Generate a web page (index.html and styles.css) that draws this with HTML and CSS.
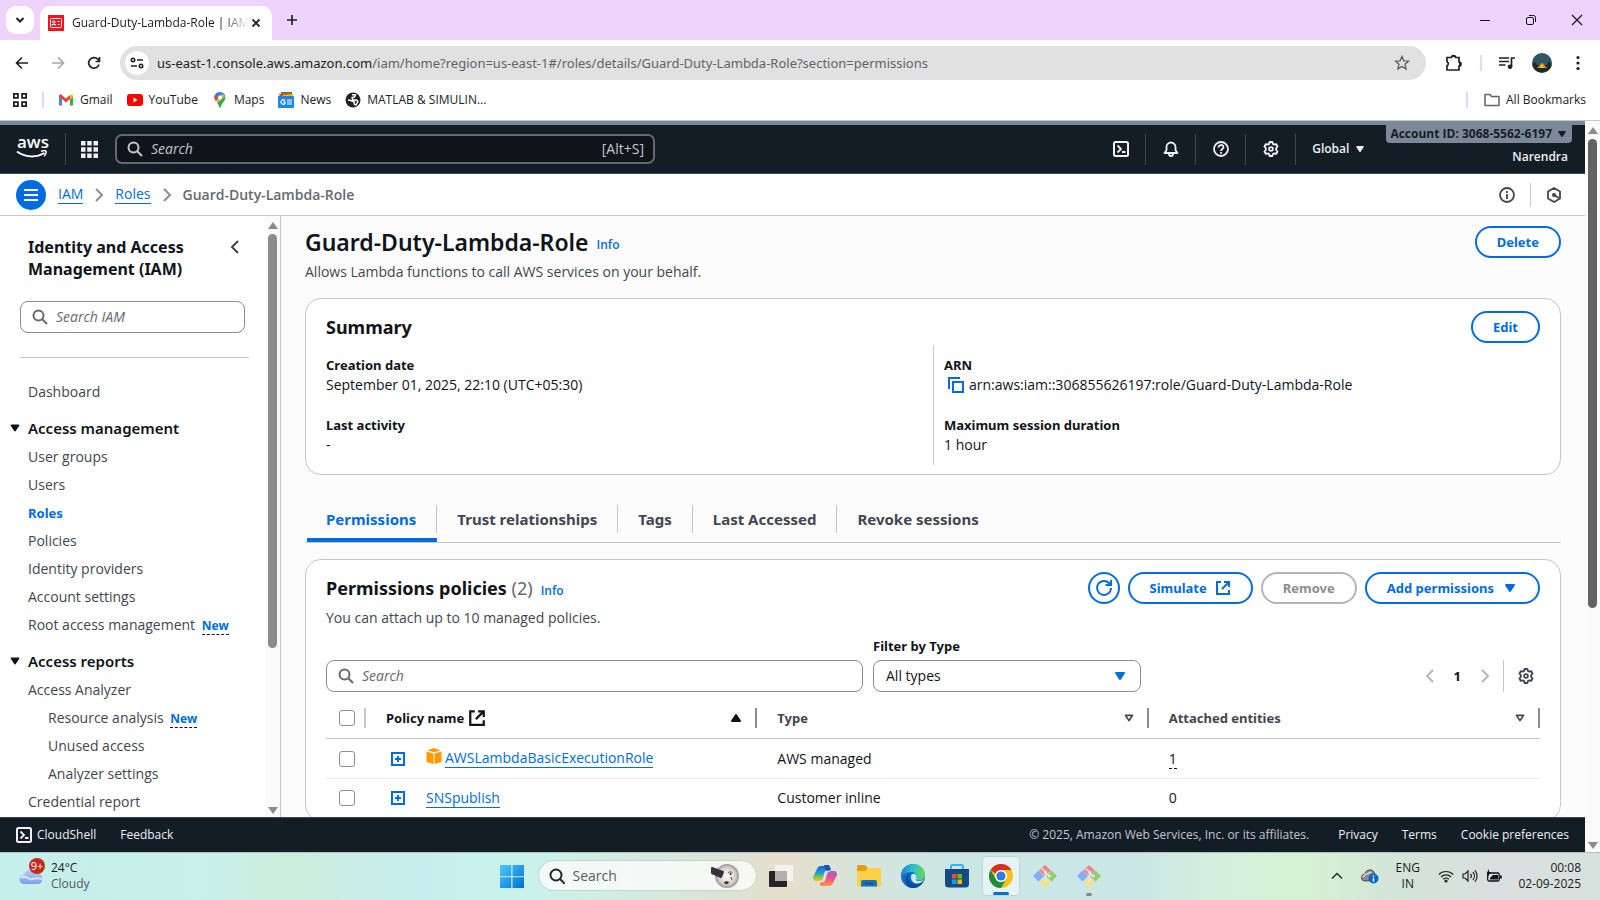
FILE: index.html
```html
<!DOCTYPE html>
<html lang="en">
<head>
<meta charset="utf-8">
<title>Guard-Duty-Lambda-Role | IAM</title>
<link rel="stylesheet" href="styles.css">
</head>
<body>
<svg class="sprite" aria-hidden="true">
  <defs>
    <symbol id="i-search" viewBox="0 0 16 16"><circle cx="6.5" cy="6.5" r="5" fill="none" stroke="currentColor" stroke-width="2"/><path d="M10.5 10.5 15 15" stroke="currentColor" stroke-width="2"/></symbol>
    <symbol id="i-left" viewBox="0 0 16 16"><path d="M11 2 5 8l6 6" fill="none" stroke="currentColor" stroke-width="2"/></symbol>
    <symbol id="i-right" viewBox="0 0 16 16"><path d="M5 2l6 6-6 6" fill="none" stroke="currentColor" stroke-width="2"/></symbol>
    <symbol id="i-down" viewBox="0 0 16 16"><path d="M4 5h8l-4 6z" fill="currentColor" stroke="currentColor" stroke-width="2" stroke-linejoin="round"/></symbol>
    <symbol id="i-up" viewBox="0 0 16 16"><path d="M4 11h8L8 5z" fill="currentColor" stroke="currentColor" stroke-width="2" stroke-linejoin="round"/></symbol>
    <symbol id="i-sort" viewBox="0 0 16 16"><path d="M4 5h8l-4 6z" fill="none" stroke="currentColor" stroke-width="2" stroke-linejoin="round"/></symbol>
    <symbol id="i-external" viewBox="0 0 16 16"><path d="M6 2H2v12h12v-4M9 2h5v5M14 2 7 9" fill="none" stroke="currentColor" stroke-width="2"/></symbol>
    <symbol id="i-gear" viewBox="0 0 16 16"><path d="M6.6 1h2.8l.5 1.9 1.3.7 1.9-.5 1.4 2.4L13.2 7v2l1.3 1.5-1.4 2.4-1.9-.5-1.3.7-.5 1.9H6.600l-.5-1.900-1.300-.7-1.900.5-1.400-2.400L2.800 9V7L1.500 5.500l1.400-2.400 1.900.5 1.300-.7z" fill="none" stroke="currentColor" stroke-width="1.900" stroke-linejoin="round"/><circle cx="8" cy="8" r="1.900" fill="none" stroke="currentColor" stroke-width="1.800"/></symbol>
    <symbol id="i-shell" viewBox="0 0 16 16"><rect x="1" y="1" width="14" height="14" rx="1.500" fill="none" stroke="currentColor" stroke-width="2"/><path d="M4.500 4.500 8 8l-3.500 3.500M9 11h3.500" fill="none" stroke="currentColor" stroke-width="1.800"/></symbol>
    <symbol id="i-plus" viewBox="0 0 14 14"><path d="M1 1h12v12H1zM7 4v6M4 7h6" fill="none" stroke="currentColor" stroke-width="2"/></symbol>
    <symbol id="i-git" viewBox="0 0 24 24"><path d="M12 1 6 6.500 12 12l6-5.500z" fill="#f58286"/><path d="M5.500 6.500 0 12l5.500 5.500L11 12z" fill="#84adf7"/><path d="M18.500 6.500 24 12l-5.500 5.500L13 12z" fill="#8fce6a"/><path d="M12 12.500 6.500 18 12 23.500 17.500 18z" fill="#fbe183"/><path d="M8.500 4.500 12.500 8v8M12.500 9l4 3" stroke="#d9eae9" stroke-width="1.600" fill="none"/><circle cx="12.500" cy="8" r="1.600" fill="#d9eae9"/><circle cx="12.500" cy="16" r="1.600" fill="#d9eae9"/><circle cx="16.500" cy="12" r="1.600" fill="#d9eae9"/></symbol>
  </defs>
</svg>

<header class="browser">
  <div class="tabstrip">
    <button class="tab-search" aria-label="Search tabs"><svg width="10" height="10" viewBox="0 0 10 10"><path d="M1.500 3 5 6.500 8.500 3" fill="none" stroke="#202124" stroke-width="2"/></svg></button>
    <div class="tab">
      <svg width="16" height="16" viewBox="0 0 16 16"><rect width="16" height="16" fill="#f5121c"/><g fill="none" stroke="#fff"><rect x="2.500" y="3.500" width="11" height="9" rx="1"/><circle cx="5.800" cy="7" r="1.200"/><path d="M4 10.500V9.500h3.500v1M9.500 6.500h2M9.500 9.500h2"/></g></svg>
      <span class="tab-title">Guard-Duty-Lambda-Role | IAM</span>
      <button class="plain" aria-label="Close tab"><svg width="10" height="10" viewBox="0 0 10 10"><path d="M1.500 1.500l7 7m0-7-7 7" stroke="#202124" stroke-width="1.800"/></svg></button>
    </div>
    <button class="plain new-tab" aria-label="New tab"><svg width="12" height="12" viewBox="0 0 12 12"><path d="M6 1v10M1 6h10" stroke="#202124" stroke-width="1.700"/></svg></button>
    <div class="window-buttons">
      <button class="plain" aria-label="Minimize"><svg width="12" height="12" viewBox="0 0 12 12"><path d="M1 6.500h10" stroke="#111"/></svg></button>
      <button class="plain" aria-label="Restore"><svg width="12" height="12" viewBox="0 0 12 12" fill="none" stroke="#111"><rect x="1.500" y="3.500" width="7" height="7" rx="1.500"/><path d="M4 1.500h4.500a2 2 0 0 1 2 2V8"/></svg></button>
      <button class="plain" aria-label="Close"><svg width="12" height="12" viewBox="0 0 12 12"><path d="M1 1l10 10M11 1 1 11" stroke="#111" stroke-width="1.100"/></svg></button>
    </div>
  </div>
  <div class="toolbar">
    <button class="plain nav" aria-label="Back"><svg width="14" height="14" viewBox="0 0 14 14" fill="none" stroke="#202124" stroke-width="1.600"><path d="M7 1.500 1.500 7 7 12.500M2 7h11"/></svg></button>
    <button class="plain nav" aria-label="Forward"><svg width="14" height="14" viewBox="0 0 14 14" fill="none" stroke="#a6a6a6" stroke-width="1.600"><path d="M7 1.500 12.500 7 7 12.500M12 7H1"/></svg></button>
    <button class="plain nav" aria-label="Reload"><svg width="14" height="14" viewBox="0 0 14 14" fill="none" stroke="#202124" stroke-width="1.700"><path d="M12 8.500A5.300 5.300 0 1 1 10.800 3.200L12.500 5M12.500 1v4.500H8.500"/></svg></button>
    <div class="omnibox">
      <span class="site-info"><svg width="14" height="14" viewBox="0 0 14 14" fill="none" stroke="#202124" stroke-width="1.600"><circle cx="3" cy="4" r="1.700"/><path d="M7 4h6M1 10h6"/><circle cx="11" cy="10" r="1.700"/></svg></span>
      <span class="url"><b>us-east-1.console.aws.amazon.com</b>/iam/home?region=us-east-1#/roles/details/Guard-Duty-Lambda-Role?section=permissions</span>
      <svg width="16" height="16" viewBox="0 0 16 16"><path d="M8 1.500l1.900 4.300 4.700.4-3.600 3.100 1.100 4.600L8 11.500l-4.100 2.400L5 9.300 1.400 6.200l4.700-.4z" fill="none" stroke="#5a5a5a" stroke-width="1.300"/></svg>
    </div>
    <div class="tool-icons">
      <svg width="18" height="18" viewBox="0 0 18 18"><path d="M2 3.500h4.500a2 2 0 0 1 4 0H14V8a2 2 0 0 1 0 4v4H2v-4.200a2.200 2.200 0 0 0 0-4z" fill="none" stroke="#202124" stroke-width="1.700"/><path d="M6.500 3a2 2 0 0 1 4 0M14 7.500a2 2 0 0 1 0 4" fill="#202124"/></svg>
      <i class="pink-bar"></i>
      <svg width="16" height="14" viewBox="0 0 16 14"><path d="M0 2h10M0 5.500h10M0 9h6.500M12.500 11V2H16" fill="none" stroke="#202124" stroke-width="1.700"/><circle cx="11" cy="10.800" r="2.300" fill="#202124"/></svg>
      <svg width="20" height="20" viewBox="0 0 20 20"><circle cx="10" cy="10" r="10" fill="#2f5566"/><path d="M.3 12 3 8.500 5 12h10l2-3.500 2.700 3.500A10 10 0 0 1 .3 12z" fill="#1d2b24"/><path d="M5 15 10 9.500 15 15z" fill="#f58518"/><path d="M8.500 15 10 11l1.500 4z" fill="#ffd34d"/></svg>
      <svg class="dots" width="4" height="16" viewBox="0 0 4 16" fill="#202124"><circle cx="2" cy="2.500" r="1.600"/><circle cx="2" cy="8" r="1.600"/><circle cx="2" cy="13.500" r="1.600"/></svg>
    </div>
  </div>
  <nav class="bookmarks">
    <svg width="16" height="16" viewBox="0 0 16 16" fill="none" stroke="#202124" stroke-width="1.800"><path d="M1.900 1.900h4v4h-4zM10.100 1.900h4v4h-4zM1.900 10.100h4v4h-4zM10.100 10.100h4v4h-4z"/></svg>
    <i class="pink-bar"></i>
    <a href="#"><svg width="16" height="16" viewBox="0 0 16 16"><path d="M1 4v9.500h3V7z" fill="#4285f4"/><path d="M15 4v9.500h-3V7z" fill="#34a853"/><path d="M1 3.500 2.500 2 8 6.500 12 3v4L8 10.500 4 7 1 5z" fill="#ea4335"/><path d="M12 3.500c1-1.500 3-1 3 .5v1L12 7.500z" fill="#fbbc04"/></svg>Gmail</a>
    <a href="#"><svg width="16" height="16" viewBox="0 0 16 16"><rect y="2" width="16" height="12" rx="3" fill="#f00"/><path d="M6.500 5.500v5l4-2.500z" fill="#fff"/></svg>YouTube</a>
    <a href="#"><svg width="16" height="16" viewBox="0 0 16 16"><path d="M2.500 5.500A5.500 5.500 0 0 1 9 .2L4 7.500z" fill="#1a73e8"/><path d="M8 0a5.500 5.500 0 0 1 5.200 3.800L5 10 2.500 6z" fill="#4285f4"/><path d="M3.200 2.500 6 5l-2.400 4C2 6.500 2 4 3.200 2.500z" fill="#ea4335"/><path d="M4 9l6-6.500L12.500 3 6.500 12z" fill="#fbbc04"/><path d="M13.200 3.800C14.500 9 9 11 8.500 16H7.500C7.300 14 6 12.500 5.300 11.300z" fill="#34a853"/><circle cx="8" cy="5.500" r="2" fill="#fff"/></svg>Maps</a>
    <a href="#"><svg width="16" height="16" viewBox="0 0 16 16"><path d="M3 0h11v5H3z" fill="#0c9d58"/><path d="M1 2l11-1.500L13 5H2z" fill="#ea4335"/><path d="M5 3l10-1v3H5z" fill="#fbbc04"/><rect y="4" width="16" height="12" rx="1" fill="#1a84f0"/><path d="M7 8.500A2.300 2.300 0 1 0 7 11.500V10H5M9 8h5M9 10h5M9 12h5" fill="none" stroke="#fff" stroke-width="1.200"/></svg>News</a>
    <a href="#"><svg width="16" height="16" viewBox="0 0 16 16"><circle cx="8" cy="8" r="7.500" fill="#202124"/><path d="M7 2.800h3.500L9.500 5 7 5.500 8 8h3.500l1.500 1.500-2 3.500-1.800-1 .3-2L6 8.500 3 8" fill="none" stroke="#fff" stroke-width="1.500" stroke-linejoin="round"/></svg>MATLAB &amp; SIMULIN...</a>
    <span class="all-bookmarks"><i class="pink-bar"></i><a href="#"><svg width="16" height="14" viewBox="0 0 16 14"><path d="M1 1.500h5l1.500 2H15v9H1z" fill="none" stroke="#5f6368" stroke-width="1.500" stroke-linejoin="round"/></svg>All Bookmarks</a></span>
  </nav>
</header>

<div class="viewport">
  <div class="page">
    <header class="aws-header">
      <a class="aws-logo" href="#" aria-label="AWS"><span>aws</span><svg width="32" height="9" viewBox="0 0 32 9"><path d="M1 1.500c8 6 19 6.500 27.500 1.500" fill="none" stroke="#fff" stroke-width="2"/><path d="M25 1.300c2.500-.8 4.500-.8 5 0s-.3 3-1.800 5" fill="none" stroke="#fff" stroke-width="1.500"/></svg></a>
      <button class="plain apps" aria-label="Services"><svg width="17" height="17" viewBox="0 0 17 17" fill="#f0f0f5"><path d="M0 0h4.500v4.500H0zM6.200 0h4.500v4.500H6.200zM12.500 0H17v4.500h-4.500zM0 6.200h4.500v4.500H0zM6.200 6.200h4.500v4.500H6.200zM12.500 6.200H17v4.500h-4.500zM0 12.500h4.500V17H0zM6.200 12.500h4.500V17H6.200zM12.500 12.500H17V17h-4.500z"/></svg></button>
      <label class="aws-search"><svg width="16" height="16"><use href="#i-search"/></svg><input type="search" placeholder="Search" aria-label="Search"><span>[Alt+S]</span></label>
      <div class="aws-tools">
        <button class="plain" aria-label="CloudShell"><svg width="16" height="16"><use href="#i-shell"/></svg></button>
        <button class="plain" aria-label="Notifications"><svg width="16" height="16" viewBox="0 0 16 16" fill="none" stroke="currentColor" stroke-width="1.800"><path d="M1.500 12h13l-2-2.700V6a4.500 4.500 0 0 0-9 0v3.300z" stroke-linejoin="round"/><path d="M6 12v1a2 2 0 0 0 4 0v-1"/></svg></button>
        <button class="plain" aria-label="Help"><svg width="16" height="16" viewBox="0 0 16 16" fill="none" stroke="currentColor" stroke-width="1.800"><circle cx="8" cy="8" r="7"/><path d="M5.500 6.500C5.500 3.200 10.500 3.300 10.500 6.200 10.500 8 8 8 8 10M8 11v1.700"/></svg></button>
        <button class="plain" aria-label="Settings"><svg width="16" height="16"><use href="#i-gear"/></svg></button>
      </div>
      <button class="plain region">Global <svg width="12" height="12"><use href="#i-down"/></svg></button>
      <div class="account"><button class="plain account-id">Account ID: 3068-5562-6197 <svg width="12" height="12"><use href="#i-down"/></svg></button><span>Narendra</span></div>
    </header>

    <div class="crumb-bar">
      <button class="menu" aria-label="Menu"><svg width="14" height="14" viewBox="0 0 14 14"><path d="M0 2h14M0 7h14M0 12h14" stroke="#fff" stroke-width="2"/></svg></button>
      <nav class="crumbs"><a href="#">IAM</a><svg width="16" height="16"><use href="#i-right"/></svg><a href="#">Roles</a><svg width="16" height="16"><use href="#i-right"/></svg><span>Guard-Duty-Lambda-Role</span></nav>
      <div class="crumb-tools">
        <button class="plain" aria-label="Info"><svg width="16" height="16" viewBox="0 0 16 16" fill="none" stroke="currentColor" stroke-width="1.800"><circle cx="8" cy="8" r="7"/><path d="M8 4v2M8 7v5"/></svg></button>
        <button class="plain" aria-label="Resources"><svg width="16" height="16" viewBox="0 0 16 16" fill="none" stroke="currentColor" stroke-width="1.800"><path d="M8 1l6 3.500v7L8 15l-6-3.500v-7z" stroke-linejoin="round"/><path d="M8 8l5 3"/><circle cx="8" cy="8" r="2" fill="currentColor" stroke="none"/></svg></button>
      </div>
    </div>

    <div class="body">
      <aside class="sidebar">
        <div class="side-scroll">
          <div class="side-title"><h2>Identity and Access Management (IAM)</h2><button class="plain" aria-label="Collapse"><svg width="16" height="16"><use href="#i-left"/></svg></button></div>
          <label class="field side-search"><svg width="16" height="16"><use href="#i-search"/></svg><input type="search" placeholder="Search IAM" aria-label="Search IAM"></label>
          <hr>
          <nav class="side-nav">
            <a href="#">Dashboard</a>
            <h3><svg width="14" height="14"><use href="#i-down"/></svg>Access management</h3>
            <a href="#">User groups</a>
            <a href="#">Users</a>
            <a href="#" class="current">Roles</a>
            <a href="#">Policies</a>
            <a href="#">Identity providers</a>
            <a href="#">Account settings</a>
            <a href="#">Root access management <small>New</small></a>
            <h3><svg width="14" height="14"><use href="#i-down"/></svg>Access reports</h3>
            <a href="#">Access Analyzer</a>
            <a href="#" class="sub">Resource analysis <small>New</small></a>
            <a href="#" class="sub">Unused access</a>
            <a href="#" class="sub">Analyzer settings</a>
            <a href="#">Credential report</a>
          </nav>
        </div>
        <div class="scrollbar side-bar"><i class="arrow-up"></i><i class="thumb"></i><i class="arrow-down"></i></div>
      </aside>

      <main class="content">
        <div class="title-row"><h1>Guard-Duty-Lambda-Role</h1><a class="info" href="#">Info</a><button class="btn">Delete</button></div>
        <p class="lead">Allows Lambda functions to call AWS services on your behalf.</p>

        <section class="card summary">
          <div class="card-head"><h2>Summary</h2><button class="btn">Edit</button></div>
          <div class="facts">
            <dl><dt>Creation date</dt><dd>September 01, 2025, 22:10 (UTC+05:30)</dd><dt>Last activity</dt><dd>-</dd></dl>
            <dl><dt>ARN</dt><dd class="arn"><svg width="16" height="16" viewBox="0 0 16 16" fill="none" stroke="currentColor" stroke-width="2"><path d="M5 5h10v10H5zM1 12V1h11"/></svg>arn:aws:iam::306855626197:role/Guard-Duty-Lambda-Role</dd><dt>Maximum session duration</dt><dd>1 hour</dd></dl>
          </div>
        </section>

        <div class="tabs" role="tablist">
          <button role="tab" class="active" aria-selected="true"><span>Permissions</span></button><button role="tab"><span>Trust relationships</span></button><button role="tab"><span>Tags</span></button><button role="tab"><span>Last Accessed</span></button><button role="tab"><span>Revoke sessions</span></button>
        </div>

        <section class="card policies">
          <div class="card-head">
            <h2>Permissions policies <span>(2)</span></h2><a class="info" href="#">Info</a>
            <div class="actions">
              <button class="btn round" aria-label="Refresh"><svg width="18" height="18" viewBox="0 0 18 18" fill="none" stroke="currentColor" stroke-width="2"><path d="M16 9a7 7 0 1 1-2-5l2 1.800M16 1v5h-5.500"/></svg></button>
              <button class="btn">Simulate <svg width="16" height="16"><use href="#i-external"/></svg></button>
              <button class="btn" disabled>Remove</button>
              <button class="btn">Add permissions <svg width="16" height="16"><use href="#i-down"/></svg></button>
            </div>
          </div>
          <p class="hint">You can attach up to 10 managed policies.</p>
          <div class="filters">
            <label class="field policy-search"><svg width="16" height="16"><use href="#i-search"/></svg><input type="search" placeholder="Search" aria-label="Search policies"></label>
            <div class="type-filter"><label for="type">Filter by Type</label><div class="select-wrap"><select id="type"><option>All types</option></select><svg width="16" height="16"><use href="#i-down"/></svg></div></div>
            <div class="pager"><button class="plain dim" aria-label="Previous"><svg width="16" height="16"><use href="#i-left"/></svg></button><b>1</b><button class="plain dim" aria-label="Next"><svg width="16" height="16"><use href="#i-right"/></svg></button><button class="plain prefs" aria-label="Preferences"><svg width="16" height="16"><use href="#i-gear"/></svg></button></div>
          </div>
          <table>
            <colgroup><col class="c-check"><col><col><col></colgroup>
            <thead><tr>
              <th><div class="th pale"><input type="checkbox" aria-label="Select all"></div></th>
              <th><div class="th dark"><span>Policy name <svg width="18" height="18"><use href="#i-external"/></svg></span><svg width="16" height="16"><use href="#i-up"/></svg></div></th>
              <th><div class="th"><span>Type</span><svg width="14" height="14"><use href="#i-sort"/></svg></div></th>
              <th><div class="th"><span>Attached entities</span><svg width="14" height="14"><use href="#i-sort"/></svg></div></th>
            </tr></thead>
            <tbody>
              <tr><td class="check"><input type="checkbox" aria-label="Select AWSLambdaBasicExecutionRole"></td><td><div class="name"><button class="plain expand" aria-label="Expand"><svg width="14" height="14"><use href="#i-plus"/></svg></button><svg class="cube" width="16" height="16" viewBox="0 0 16 16" fill="#ff9900"><path d="M1.500 2.500 8 0l6.500 2.500L8 4.300zM.5 3.500l7 2V16l-7-2zM15.500 3.500l-7 2V16l7-2z"/></svg><a href="#">AWSLambdaBasicExecutionRole</a></div></td><td>AWS managed</td><td><span class="dashed">1</span></td></tr>
              <tr><td class="check"><input type="checkbox" aria-label="Select SNSpublish"></td><td><div class="name"><button class="plain expand" aria-label="Expand"><svg width="14" height="14"><use href="#i-plus"/></svg></button><a href="#">SNSpublish</a></div></td><td>Customer inline</td><td>0</td></tr>
            </tbody>
          </table>
        </section>
      </main>
    </div>

    <footer class="aws-footer">
      <a href="#"><svg width="16" height="16"><use href="#i-shell"/></svg>CloudShell</a><a href="#" class="feedback">Feedback</a>
      <span>© 2025, Amazon Web Services, Inc. or its affiliates.</span>
      <a href="#">Privacy</a><a href="#">Terms</a><a href="#">Cookie preferences</a>
    </footer>
  </div>
  <div class="scrollbar page-bar"><i class="arrow-up"></i><i class="thumb"></i><i class="arrow-down"></i></div>
</div>

<footer class="taskbar">
  <div class="weather">
    <div class="weather-icon"><svg width="26" height="20" viewBox="0 0 26 20"><defs><linearGradient id="cl" x2="0" y2="1"><stop stop-color="#b9cdf5"/><stop offset="1" stop-color="#7f9fe6"/></linearGradient></defs><path d="M5 18a4.500 4.500 0 0 1 0-9 7 7 0 0 1 13-2 5.800 5.800 0 0 1 2 11z" fill="url(#cl)"/><path d="M2 12c4-3 6 0 9 1s8-3 13 1" fill="none" stroke="#d8e4fb" stroke-width="2"/></svg><span class="badge">9+</span></div>
    <div>24°C<br><span>Cloudy</span></div>
  </div>
  <div class="apps-row">
    <button class="tile" aria-label="Start"><svg width="24" height="24" viewBox="0 0 24 24"><defs><linearGradient id="wn" x2="1" y2="1"><stop stop-color="#4cc9fb"/><stop offset="1" stop-color="#006fd3"/></linearGradient></defs><path d="M0 1h11.300v11.300H0zM12.500 1H24v11.300H12.500zM0 13.300h11.300V24H0zM12.500 13.300H24V24H12.500z" fill="url(#wn)"/></svg></button>
    <label class="task-search"><svg width="16" height="16" viewBox="0 0 16 16" fill="none" stroke="#222" stroke-width="1.900"><circle cx="7" cy="7" r="5.500"/><path d="M11 11l4.300 4.300" stroke-linecap="round"/></svg><input type="search" placeholder="Search" aria-label="Search Windows"><svg width="30" height="26" viewBox="0 0 30 26"><defs><radialGradient id="mn"><stop stop-color="#fff"/><stop offset=".7" stop-color="#d5d0cc"/><stop offset="1" stop-color="#9c9490"/></radialGradient></defs><circle cx="17" cy="13" r="12" fill="url(#mn)"/><path d="M2 5l11 4-2 5-9-4z" fill="#3a2e3b" stroke="#3a2e3b" stroke-width="2" stroke-linejoin="round"/><path d="M18 10c2-2 4-1 4 0M21 14l1 3" fill="none" stroke="#554d4c"/><circle cx="20.500" cy="11" r="1" fill="#332b2b"/><path d="M14 19c2-1 4-1 5 0-1 3-4 3-5 0z" fill="#4b2b31"/></svg></label>
    <button class="tile" aria-label="Task view"><svg width="24" height="24" viewBox="0 0 24 24"><rect y="7" width="18" height="16" rx="1" fill="#252525"/><rect x="6" y="1" width="18" height="16" rx="1" fill="#fafafa" fill-opacity=".75"/><rect x="6" y="7" width="12" height="10" fill="#b3b0ab"/></svg></button>
    <button class="tile" aria-label="Copilot"><svg width="24" height="24" viewBox="0 0 24 24"><defs><linearGradient id="c1" x2="0" y2="1"><stop stop-color="#1c5fd0"/><stop offset=".45" stop-color="#18a0d8"/><stop offset=".75" stop-color="#8cc63f"/><stop offset="1" stop-color="#f4c20d"/></linearGradient><linearGradient id="c2" x2="0" y2="1"><stop stop-color="#9b5de5"/><stop offset=".5" stop-color="#f0508c"/><stop offset="1" stop-color="#ff9a3c"/></linearGradient></defs><path d="M8 2h7q3 0 2 3l-3 1q-2 0-3 4l-1 4q-1 3-4 3H3q-3 0-3-4L4 5q1-3 4-3z" fill="url(#c1)"/><path d="M16 22H9q-3 0-2-3l3-1q2 0 3-4l1-4q1-3 4-3h3q3 0 3 4l-4 8q-1 3-4 3z" fill="url(#c2)"/><path d="M11 1h5l2 5-5 1z" fill="#1752b8"/></svg></button>
    <button class="tile" aria-label="File Explorer"><svg width="24" height="24" viewBox="0 0 24 24"><path d="M0 2.500Q0 1 1.500 1H8l3 3h13v6H0z" fill="#e0a010"/><path d="M0 7h8l3-3h13v17q0 1.500-1.500 1.500h-21Q0 22.500 0 21z" fill="#ffcf48"/><path d="M4 22.500V18q0-2 2-2h12q2 0 2 2v4.500z" fill="#1573be"/><path d="M8 19.500h8" stroke="#0b4d8c" stroke-width="1.500"/></svg></button>
    <button class="tile" aria-label="Edge"><svg width="24" height="24" viewBox="0 0 24 24"><defs><linearGradient id="e1"><stop stop-color="#1588d5"/><stop offset=".5" stop-color="#2fc0d0"/><stop offset="1" stop-color="#6ed94b"/></linearGradient></defs><circle cx="12" cy="12" r="12" fill="#1170c6"/><path d="M.3 9C2 3 7 0 12 0c7 0 12 5 12 10.500 0 4-3 6-6 6-4 0-4-2-3-4 .5-3-2-4.500-5-4.500C6 8 2 9.500.3 13z" fill="url(#e1)"/><path d="M9 9c-3 4 0 11 6 11 3 0 5-1 7-2.500C20 22 16 24 12 24 6 24 3 18 5 13c1-2 2-3 4-4z" fill="#0c4c9e"/><path d="M10 12.500c0-3 4-4 5-1s-2 5.500 3 5.500c2 0 4-.5 5-2-2 4-5 5-8 4.500s-5-3-5-7z" fill="#cde9e7"/></svg></button>
    <button class="tile" aria-label="Microsoft Store"><svg width="24" height="24" viewBox="0 0 24 24"><path d="M6 6V2.500Q6 1 7.500 1h9Q18 1 18 2.500V6" fill="none" stroke="#31b5ef" stroke-width="2"/><path d="M0 5h24v15q0 3.500-3.500 3.500h-17Q0 23.500 0 20z" fill="#154a83"/><path d="M7 10h4.500v4.500H7z" fill="#f25022"/><path d="M12.500 10H17v4.500h-4.500z" fill="#7fba00"/><path d="M7 15.500h4.500V20H7z" fill="#00a4ef"/><path d="M12.500 15.500H17V20h-4.500z" fill="#ffb900"/></svg></button>
    <button class="tile on" aria-label="Chrome"><svg width="24" height="24" viewBox="0 0 24 24"><circle cx="12" cy="12" r="12" fill="#fbc116"/><path d="M1.600 6A12 12 0 0 1 22.400 6H12a6 6 0 0 0-5.500 3.500z" fill="#d93025"/><path d="M1.600 6A12 12 0 0 0 12 24l5.200-9A6 6 0 0 1 6.800 15z" fill="#1e8e3e"/><circle cx="12" cy="12" r="6" fill="#fff"/><circle cx="12" cy="12" r="4.600" fill="#2f7bea"/></svg><i class="run"></i></button>
    <button class="tile" aria-label="Git"><svg width="24" height="24"><use href="#i-git"/></svg></button>
    <button class="tile" aria-label="Git Bash"><svg width="24" height="24"><use href="#i-git"/></svg><i class="run idle"></i></button>
  </div>
  <div class="tray">
    <svg width="12" height="8" viewBox="0 0 12 8"><path d="M1 6.500 6 1.500l5 5" fill="none" stroke="#222" stroke-width="1.300"/></svg>
    <svg class="onedrive" width="18" height="16" viewBox="0 0 18 16"><path d="M4 13a3.500 3.500 0 0 1 0-7 5 5 0 0 1 9-2l2 8z" fill="#8c8c8c" stroke="#444"/><path d="M1.500 9c3-4 7-4 9-5" stroke="#d7d7d7" stroke-width="1.500" fill="none"/><circle cx="12.500" cy="10.500" r="5" fill="#0a66c2"/><path d="M12.500 7.300v1.500M12.500 9.700v4" stroke="#fff" stroke-width="1.500"/></svg>
    <div class="lang">ENG<br>IN</div>
    <div class="status">
      <svg width="16" height="14" viewBox="0 0 16 14" fill="none" stroke="#222" stroke-width="1.200"><path d="M.8 5.500a10.200 10.200 0 0 1 14.400 0M3 8a7 7 0 0 1 10 0M5.200 10.300a4 4 0 0 1 5.600 0"/><circle cx="8" cy="12" r="1" fill="#222"/></svg>
      <svg width="16" height="14" viewBox="0 0 16 14" fill="none" stroke="#222" stroke-width="1.200"><path d="M1 5h2l3-3v10L3 9H1zM8.500 5a3 3 0 0 1 0 4M10.800 3a6 6 0 0 1 0 8M13 1.300a9 9 0 0 1 0 11.400"/></svg>
      <svg width="16" height="14" viewBox="0 0 16 14"><rect x="1.700" y="4" width="11.500" height="8" rx="1.500" fill="none" stroke="#111" stroke-width="1.300"/><path d="M4 9l3-3h5v4.500H4zM14 6.500h1.800v3H14z" fill="#111"/><path d="M3 0 .5 4.500h2L1.500 8 5 3H3z" fill="#111"/></svg>
    </div>
    <div class="clock">00:08<br>02-09-2025</div>
  </div>
</footer>
</body>
</html>
```

FILE: styles.css
```css
* { box-sizing: border-box; }
body {
  margin: 0;
  height: 100vh;
  display: flex;
  flex-direction: column;
  overflow: hidden;
  font: 14px/20px "Open Sans", sans-serif;
  color: #0f141a;
  background: #fff;
}
svg { flex: none; display: block; }
.sprite { position: absolute; width: 0; height: 0; }
button, input, select { font: inherit; color: inherit; }
h1, h2, h3, p, dl, dd { margin: 0; }
h1, h2, h3, th, .btn, .facts dt, .tabs button, .type-filter label, .pager b, .side-nav .current, .side-nav small {
  font-family: "Noto Sans", sans-serif;
  font-weight: 700;
}
a { color: #006ce0; text-decoration: none; }
.plain { border: 0; background: none; padding: 0; display: flex; align-items: center; justify-content: center; white-space: nowrap; }
input[type="search"] { appearance: none; border: 0; outline: 0; background: none; padding: 0; min-width: 0; flex: 1; }

/* Browser frame */
.browser { flex: none; color: #202124; font-size: 12px; border-bottom: 1px solid #c9c9c9; }
.tabstrip { display: flex; align-items: center; height: 40px; padding: 0 0 0 6px; background: #eed3fd; }
.tab-search { width: 28px; height: 28px; border: 0; border-radius: 10px; background: #fff; display: grid; place-items: center; }
.tab { display: flex; align-items: center; gap: 8px; width: 232px; height: 34px; margin: 6px 0 0 6px; padding: 0 11px 0 8px; background: #fff; border-radius: 10px 10px 0 0; }
.tab-title { flex: 1; margin-right: -6px; white-space: nowrap; -webkit-mask-image: linear-gradient(90deg, #000 85%, transparent); mask-image: linear-gradient(90deg, #000 85%, transparent); }
.new-tab { margin-left: 14px; }
.window-buttons { display: flex; gap: 34px; margin-left: auto; padding-right: 17px; }
.toolbar { display: flex; align-items: center; height: 46px; padding: 0 20px 0 15px; gap: 22px; }
.omnibox { flex: 1; display: flex; align-items: center; height: 34px; padding: 0 16px 0 5px; margin: 0 -3px; border-radius: 17px; background: #e1e1e1; font: 13px/20px "Noto Sans", sans-serif; }
.site-info { width: 24px; height: 24px; border-radius: 50%; background: #fff; display: grid; place-items: center; margin-right: 8px; }
.url { flex: 1; color: #5f6368; white-space: nowrap; overflow: hidden; }
.url b { font-weight: 400; color: #202124; }
.tool-icons { display: flex; align-items: center; gap: 17px; }
.dots { margin-left: 7px; }
.pink-bar { width: 2px; height: 16px; background: #eed3fd; }
.bookmarks { display: flex; align-items: center; height: 34px; padding: 0 14px 6px 12px; gap: 14px; }
.bookmarks a { display: flex; align-items: center; gap: 6px; color: #202124; }
.all-bookmarks { display: flex; align-items: center; gap: 16px; margin-left: auto; }

/* Page viewport */
.viewport { flex: 1; min-height: 0; display: flex; }
.page { flex: 1; min-width: 0; display: flex; flex-direction: column; }
.scrollbar { display: flex; flex-direction: column; align-items: center; width: 15px; padding: 6px 0 3px; gap: 5px; background: #fafafa; }
.scrollbar i { flex: none; }
.scrollbar .thumb { width: 9px; border-radius: 5px; background: #8b8b8b; }
.page-bar .thumb { height: 65%; background: #636363; }
.side-bar .thumb { height: 70%; }
.arrow-up { border: 5px solid transparent; border-top: 0; border-bottom: 7px solid #8b8b8b; }
.arrow-down { border: 5px solid transparent; border-bottom: 0; border-top: 7px solid #8b8b8b; margin-top: auto; }

.aws-header { flex: none; display: flex; align-items: center; height: 53px; padding-left: 16px; border-top: 4px solid #7d8998; border-bottom: 1px solid #424650; background: #131d26; color: #f0f0f5; font-size: 12px; font-weight: 600; }
.aws-logo { width: 50px; height: 32px; border-right: 1px solid #424650; color: #fff; font: 600 17px/17px "Open Sans", sans-serif; }
.aws-logo span { display: block; padding-left: 1px; }
.apps { margin: 0 17px 0 15px; }
.aws-search { display: flex; align-items: center; gap: 8px; width: 540px; height: 30px; padding: 0 9px 0 10px; border: 2px solid #656871; border-radius: 7px; background: #0f141a; color: #c6c6cd; font-size: 14px; font-weight: 400; }
.aws-search input::placeholder, .field input::placeholder { font-style: italic; color: inherit; opacity: 1; }
.aws-tools { display: flex; margin-left: auto; }
.aws-tools .plain { width: 50px; height: 31px; border-right: 1px solid #424650; }
.region { gap: 5px; margin: 0 20px 0 16px; }
.account { align-self: stretch; display: flex; flex-direction: column; align-items: flex-end; gap: 4px; padding-right: 13px; }
.account span { padding-right: 4px; }
.account-id { height: 18px; padding: 0 4px; gap: 4px; border-radius: 0 0 4px 4px; background: #7d8998; color: #161d26; font-weight: 700; }

.crumb-bar { flex: none; display: flex; align-items: center; height: 42px; padding: 0 23px 0 16px; border-bottom: 1px solid #c6c6cd; }
.menu { width: 30px; height: 30px; border: 0; border-radius: 50%; background: #006ce0; display: grid; place-items: center; }
.crumbs { display: flex; align-items: center; gap: 8px; margin-left: 12px; color: #8c8c94; }
.crumbs a { border-bottom: 1px solid #006ce0; line-height: 18px; }
.crumbs span { color: #656871; font-weight: 600; }
.crumb-tools { display: flex; margin-left: auto; color: #424650; }
.crumb-tools .plain { height: 24px; }
.crumb-tools .plain + .plain { margin-left: 15px; padding-left: 15px; border-left: 1px solid #c6c6cd; }

.body { flex: 1; min-height: 0; display: flex; overflow: hidden; }
.sidebar { flex: none; display: flex; width: 281px; border-right: 1px solid #c6c6cd; }
.side-scroll { flex: 1; overflow: hidden; padding: 20px 16px 0 20px; }
.side-title { display: flex; align-items: flex-start; justify-content: space-between; padding: 0 6px 0 8px; }
.side-title h2 { width: 180px; font-size: 16px; line-height: 22px; }
.side-title .plain { height: 22px; color: #424650; }
.field { display: flex; align-items: center; gap: 8px; height: 32px; padding: 0 12px 0 11px; border: 1px solid #8c8c94; border-radius: 8px; color: #656871; background: #fff; }
.side-search { width: 225px; margin-top: 21px; }
hr { border: 0; border-top: 1px solid #c6c6cd; margin: 24px 0 20px; }
.side-nav a { display: block; height: 28px; padding: 4px 8px; color: #424650; white-space: nowrap; }
.side-nav .sub { padding-left: 28px; }
.side-nav .current { color: #006ce0; font-size: 13px; }
.side-nav h3 { display: flex; align-items: center; gap: 6px; margin: 12px 0 5px -12px; font-size: 15px; font-weight: 600; line-height: 20px; }
.side-nav small { margin-left: 3px; font-size: 12px; line-height: 16px; color: #006ce0; border-bottom: 1px dashed #0f141a; }

.content { flex: 1; min-width: 0; padding: 10px 24px 0; background: #fcfcfd; }
.title-row { display: flex; align-items: center; height: 32px; }
.title-row h1 { font-size: 23px; font-weight: 600; line-height: 30px; }
.info { margin-left: 8px; padding-top: 6px; font-size: 12px; font-weight: 600; }
.btn { display: flex; align-items: center; gap: 8px; height: 32px; padding: 0 20px; border: 2px solid #006ce0; border-radius: 16px; background: #fff; color: #006ce0; font-size: 13px; white-space: nowrap; }
.title-row .btn { margin-left: auto; }
.btn:disabled { border-color: #b4b4bb; color: #8c8c94; }
.btn.round { width: 32px; padding: 0; justify-content: center; }
.lead, .hint { color: #424650; }
.lead { margin: 4px 0 16px; }
.card { border: 1px solid #c6c6cd; border-radius: 16px; background: #fff; }
.card-head { display: flex; align-items: center; }
.card-head h2 { font-size: 18px; line-height: 24px; }
.card-head h2 span { font-weight: 400; color: #656871; }
.summary { padding: 12px 20px 9px; }
.summary .btn { margin-left: auto; }
.facts { display: grid; grid-template-columns: 1fr 1fr; margin-top: 2px; }
.facts dl { padding: 10px 0; }
.facts dl + dl { padding-left: 10px; border-left: 1px solid #c6c6cd; }
.facts dt { font-size: 13px; }
.facts dd + dt { margin-top: 20px; }
.facts dd { white-space: nowrap; }
.arn { display: flex; align-items: center; gap: 5px; padding-left: 4px; }
.arn svg { color: #006ce0; }

.tabs { display: flex; margin: 22px 0 16px; padding-left: 2px; height: 46px; border-bottom: 1px solid #c6c6cd; }
.tabs button { padding: 8px 0; border: 0; border-bottom: 4px solid transparent; background: none; color: #424650; font-size: 15px; white-space: nowrap; }
.tabs span { display: block; padding: 0 20px; line-height: 28px; border-right: 1px solid #c6c6cd; }
.tabs button:last-child span { border: 0; }
.tabs .active { color: #006ce0; border-bottom-color: #006ce0; }
.tabs .active span { padding-left: 19px; }

.policies { padding: 12px 20px 2px; }
.actions { display: flex; gap: 8px; margin-left: auto; }
.hint { margin-top: 4px; }
.filters { display: flex; align-items: flex-end; gap: 10px; margin-top: 8px; }
.policy-search { flex: 0 1 537px; }
.type-filter { flex: 0 1 268px; }
.type-filter label { display: block; font-size: 13px; margin-bottom: 4px; }
.select-wrap { position: relative; }
.select-wrap select { appearance: none; display: block; width: 100%; height: 32px; padding: 0 12px; border: 1px solid #8c8c94; border-radius: 8px; background: #fff; }
.select-wrap svg { position: absolute; right: 13px; top: 8px; color: #006ce0; pointer-events: none; }
.pager { display: flex; align-items: center; gap: 16px; height: 32px; margin-left: auto; color: #0f141a; font-size: 13px; }
.pager .dim { color: #b4b4bb; }
.prefs { height: 32px; width: 37px; padding-left: 8px; border-left: 1px solid #c6c6cd; color: #424650; margin-left: -6px; }
table { width: 100%; border-collapse: collapse; table-layout: fixed; margin-top: 8px; }
.c-check { width: 40px; }
th { padding: 0 0 10px; border-bottom: 1px solid #c6c6cd; font-size: 13px; color: #424650; }
.th { display: flex; align-items: center; justify-content: space-between; height: 20px; margin-top: 8px; padding: 0 11px 0 20px; border-right: 2px solid #8c8c94; }
.th span { display: flex; align-items: center; gap: 4px; }
.dark { color: #0f141a; }
.th.pale { padding: 0 0 0 13px; border-color: #c6c6cd; }
td { height: 40px; padding: 0 20px; border-bottom: 1px solid #ebebf0; }
tbody tr:last-child td { height: 39px; border: 0; }
.check { padding: 0 13px; }
input[type="checkbox"] { appearance: none; flex: none; display: block; width: 16px; height: 16px; margin: 0; border: 1px solid #8c8c94; border-radius: 3px; background: #fff; }
.name { display: flex; align-items: center; padding-left: 5px; }
.name a { border-bottom: 1px solid #006ce0; line-height: 18px; }
.expand { color: #006ce0; margin-right: 21px; }
.cube { margin: -5px 3px 0 0; }
.dashed { border-bottom: 1px dashed #0f141a; }

.aws-footer { flex: none; display: flex; align-items: center; gap: 24px; height: 35px; padding: 0 16px; border-top: 1px solid #424650; background: #131d26; color: #c6c6cd; font-size: 12px; }
.aws-footer a { display: flex; align-items: center; gap: 5px; color: #f0f0f5; font-weight: 500; }
.aws-footer span { margin: 0 5px 0 auto; }

/* Windows taskbar */
.taskbar { flex: none; display: grid; grid-template-columns: 1fr auto 1fr; align-items: center; height: 48px; padding: 0 19px 2px; border-top: 1px solid #b5bfc0; font: 12px/16px "Open Sans", sans-serif; color: #1b1b1b; background: linear-gradient(90deg, #c5efec 0, #c9f0e8 14%, #ccecdc 18%, #c7eeee 26%, #c9f2ea 33%, #d6e8dc 42%, #e6dfcd 49%, #d6e5dc 54%, #cbe7e5 60%, #cae6e7 70%, #d3f0dc 77%, #d5f3d3 81%, #d3e3d9 88%, #dadfe0 94%, #d5e2dc 100%); }
.weather { display: flex; align-items: center; gap: 6px; }
.weather span { color: #555; }
.weather-icon { position: relative; width: 26px; height: 36px; padding-top: 8px; }
.weather .badge { position: absolute; right: 0; top: 0; width: 16px; height: 16px; border-radius: 50%; background: #c42b1c; color: #fff; font-size: 11px; text-align: center; }
.apps-row { display: flex; align-items: center; }
.tile { position: relative; display: grid; place-items: center; width: 44px; height: 40px; padding: 0; border: 0; background: none; }
.tile.on { width: 38px; margin: 0 3px; border-radius: 4px; background: #e6f4f3; border: 1px solid #bed8d8; }
.run { position: absolute; bottom: 0; left: 50%; width: 16px; height: 3px; margin-left: -8px; border-radius: 2px; background: #0b6fd0; }
.idle { width: 6px; margin-left: -3px; background: #808a8a; }
.task-search { display: flex; align-items: center; gap: 8px; width: 219px; height: 31px; margin: 0 2px 0 4px; padding: 0 16px 0 10px; border-radius: 16px; border: 1px solid #c5d5ce; background: rgba(255, 255, 255, .72); color: #555; font-size: 14px; }
.task-search input::placeholder { color: #5c5c5c; opacity: 1; }
.tray { display: flex; align-items: center; justify-content: flex-end; }
.onedrive { margin: 0 17px 0 18px; }
.lang { text-align: center; }
.status { display: flex; gap: 8px; margin: 0 14px 0 18px; }
.clock { min-width: 65px; text-align: right; }
```
